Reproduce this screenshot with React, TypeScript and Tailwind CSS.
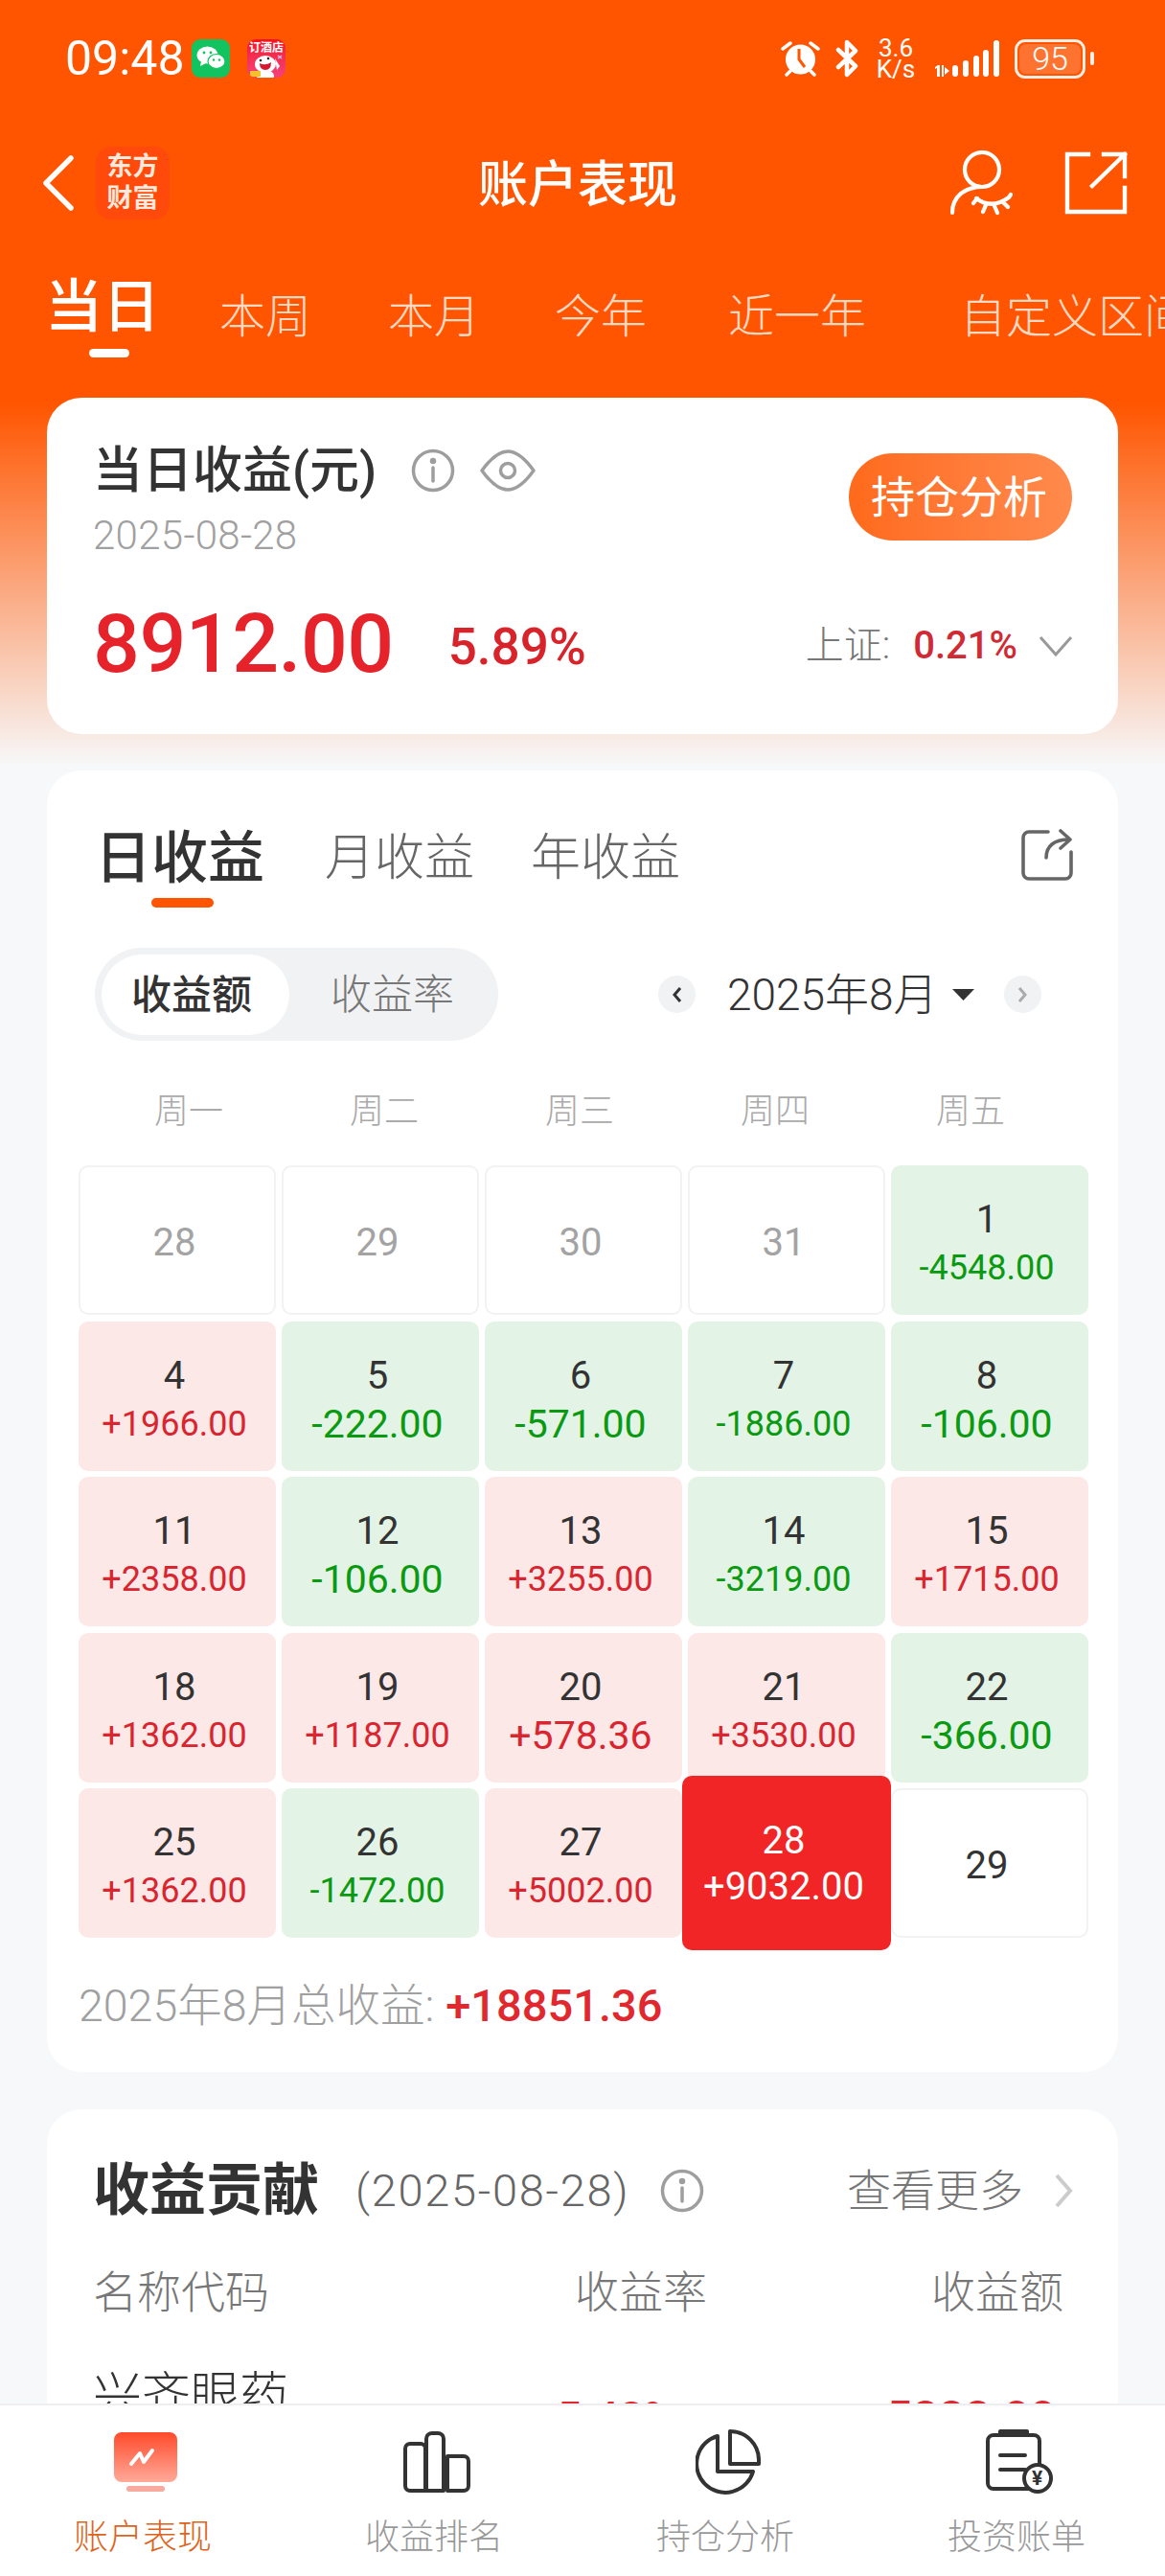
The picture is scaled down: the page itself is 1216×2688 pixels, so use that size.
const days = [
  { d: "28", muted: true },
  { d: "29", muted: true },
  { d: "30", muted: true },
  { d: "31", muted: true },
  { d: "1", v: "-4548.00" },
  { d: "4", v: "+1966.00" },
  { d: "5", v: "-222.00", big: true },
  { d: "6", v: "-571.00", big: true },
  { d: "7", v: "-1886.00" },
  { d: "8", v: "-106.00", big: true },
  { d: "11", v: "+2358.00" },
  { d: "12", v: "-106.00", big: true },
  { d: "13", v: "+3255.00" },
  { d: "14", v: "-3219.00" },
  { d: "15", v: "+1715.00" },
  { d: "18", v: "+1362.00" },
  { d: "19", v: "+1187.00" },
  { d: "20", v: "+578.36", big: true },
  { d: "21", v: "+3530.00" },
  { d: "22", v: "-366.00", big: true },
  { d: "25", v: "+1362.00" },
  { d: "26", v: "-1472.00" },
  { d: "27", v: "+5002.00" },
  { d: "28", v: "+9032.00", today: true },
  { d: "29" },
];

function InfoIcon() {
  return (
    <svg width="46" height="46" viewBox="0 0 46 46" fill="none" stroke="#9e9e9e" strokeWidth="3.5">
      <circle cx="23" cy="23" r="20.5" />
      <path d="M23 20v14" strokeLinecap="round" />
      <circle cx="23" cy="13" r="1.5" fill="#9e9e9e" />
    </svg>
  );
}

function EyeIcon() {
  return (
    <svg width="58" height="44" viewBox="0 0 58 44" fill="none" stroke="#9e9e9e" strokeWidth="3.5">
      <path d="M2 22C12 8 20 2 29 2s17 6 27 20C46 36 38 42 29 42S12 36 2 22Z" strokeLinejoin="round" />
      <circle cx="29" cy="22" r="7.5" />
    </svg>
  );
}

function Alarm() {
  return (
    <svg width="41" height="38" viewBox="0 0 41 38" fill="none">
      <circle cx="20.5" cy="20" r="15.5" fill="#fff" />
      <path d="M19 9v11l6 8" stroke="#ff5500" strokeWidth="3" />
      <path d="M2 9l8-6M39 9l-8-6M6 36l4-4M35 36l-4-4" stroke="#fff" strokeWidth="3.5" strokeLinecap="round" />
    </svg>
  );
}

function Bluetooth() {
  return (
    <svg width="25" height="40" viewBox="0 0 25 40" fill="none" stroke="#fff" strokeWidth="4.5" strokeLinejoin="round" strokeLinecap="round">
      <path d="M3 11l18 17-9 9V3l9 9L3 29" />
    </svg>
  );
}

function Signal() {
  return (
    <svg width="70" height="38" viewBox="0 0 70 38" fill="#fff">
      <path d="M3 28l3-2h2v12H5V29l-2 1ZM10 26h2v12h-2ZM13 28l5 4-5 4Z" />
      <rect x="21" y="26" width="6" height="12" rx="3" />
      <rect x="32" y="21" width="6" height="17" rx="3" />
      <rect x="43" y="16" width="6" height="22" rx="3" />
      <rect x="53" y="10" width="6" height="28" rx="3" />
      <rect x="64" y="0" width="6" height="38" rx="3" />
    </svg>
  );
}

function WeChatIcon() {
  return (
    <div className="flex h-[40px] w-[40px] items-center justify-center rounded-[9px] bg-[#12c45f]">
      <svg width="30" height="26" viewBox="0 0 30 26" fill="#fff">
        <ellipse cx="11.5" cy="9.5" rx="11" ry="9" />
        <path d="M5 16l-1 5 6-3Z" />
        <ellipse cx="21" cy="16" rx="9" ry="7.5" fill="#fff" stroke="#12c45f" strokeWidth="1.2" />
        <circle cx="8" cy="7" r="1.4" fill="#12c45f" />
        <circle cx="15" cy="7" r="1.4" fill="#12c45f" />
        <circle cx="18" cy="14.5" r="1.2" fill="#12c45f" />
        <circle cx="24" cy="14.5" r="1.2" fill="#12c45f" />
      </svg>
    </div>
  );
}

function HotelIcon() {
  return (
    <div className="relative h-[40px] w-[40px] overflow-hidden rounded-[9px] bg-gradient-to-b from-[#f5101c] to-[#f5407c]">
      <div className="text-center text-[12px] leading-[18px] font-bold whitespace-nowrap text-white">订酒店</div>
      <svg className="absolute top-0 left-0" width="40" height="40" viewBox="0 0 40 40">
        <ellipse cx="19" cy="26" rx="11" ry="9" fill="#fff" />
        <ellipse cx="19" cy="38" rx="9" ry="6" fill="#fff" />
        <path d="M13 25q6 3 12-1q0 8-6 8t-6-7Z" fill="#d81830" />
        <circle cx="14" cy="22" r="1.3" fill="#222" />
        <circle cx="22" cy="20" r="1.3" fill="#222" />
        <path d="M29 20l5 8-3 4Z" fill="#fff" />
        <rect x="3" y="33" width="11" height="6" rx="1" fill="#f4c12c" />
        <path d="M32 17l4 3m0-3l-4 3" stroke="#c9c0e8" strokeWidth="1.4" />
      </svg>
    </div>
  );
}

function EyePerson() {
  return (
    <svg width="66" height="68" viewBox="0 0 66 68" fill="none" stroke="#fff" strokeWidth="4.2" strokeLinecap="round">
      <circle cx="34" cy="20" r="18" />
      <path d="M3 65C3 48 16 38 34 38" />
      <path d="M28 50q16 12 34-1M29 50l-4 5M38 57l-3 7M47 58l3 7M56 54l5 5M62 49l2-3" />
    </svg>
  );
}

function ShareSquare() {
  return (
    <svg width="66" height="66" viewBox="0 0 66 66" fill="none" stroke="#fff" strokeWidth="4.4" strokeLinecap="square">
      <path d="M25 3H3v60h60V38" />
      <path d="M29 36L63 3M41 3h22v23" />
    </svg>
  );
}

function TabTrend() {
  return (
    <svg width="66" height="62" viewBox="0 0 66 62" fill="none">
      <defs>
        <linearGradient id="tt" x1="0" y1="0" x2="0" y2="1">
          <stop offset="0" stopColor="#ff4a2a" />
          <stop offset="1" stopColor="#ffaa9a" />
        </linearGradient>
      </defs>
      <rect x="0" y="0" width="66" height="52" rx="8" fill="url(#tt)" />
      <rect x="13" y="56" width="40" height="6" rx="3" fill="#f8aa9e" />
      <path d="M18 33l9-11 4 9 9-12" stroke="#fff" strokeWidth="4" strokeLinecap="round" strokeLinejoin="round" />
    </svg>
  );
}

function TabBars() {
  return (
    <svg width="70" height="64" viewBox="0 0 70 64" fill="none" stroke="#333" strokeWidth="4" strokeLinejoin="round">
      <path d="M2 18a5 5 0 0 1 5-5h11a5 5 0 0 1 5 5v44H7a5 5 0 0 1-5-5Z" />
      <path d="M24 8a6 6 0 0 1 6-6h6a6 6 0 0 1 6 6v54H24Z" />
      <path d="M46 26h17a5 5 0 0 1 5 5v26a5 5 0 0 1-5 5H46Z" />
    </svg>
  );
}

function TabPie() {
  return (
    <svg width="68" height="68" viewBox="0 0 68 68" fill="none" stroke="#333" strokeWidth="4" strokeLinejoin="round">
      <path d="M23 7A30 30 0 1 0 60 44H23Z" />
      <path d="M36 2a30 30 0 0 1 30 31V36H36Z" />
    </svg>
  );
}

function TabBill() {
  return (
    <div className="relative h-[68px] w-[70px]">
      <svg width="70" height="68" viewBox="0 0 70 68" fill="none" stroke="#333" strokeWidth="4">
        <path d="M8 6h42a6 6 0 0 1 6 6v44a6 6 0 0 1-6 6H8a6 6 0 0 1-6-6V12a6 6 0 0 1 6-6Z" />
        <path d="M15 5V2h28v3" strokeLinejoin="round" />
        <path d="M15 27h26M15 42h26" strokeLinecap="round" />
        <circle cx="54" cy="51" r="14" fill="#fff" />
      </svg>
      <span className="absolute top-[37px] left-[48px] text-[21px] leading-[28px] font-bold text-[#333]">¥</span>
    </div>
  );
}

function DayCell({ day }: { day: (typeof days)[number] }) {
  const positive = day.v?.startsWith("+");
  if (day.today) {
    return (
      <div className="relative z-10 -mx-[6px] -my-[13px] flex flex-col items-center justify-center rounded-[10px] bg-[#f22526] pt-[2px] pr-[6px] text-white">
        <span className="text-[40px] leading-[46px] font-normal">{day.d}</span>
        <span className="mt-[2px] text-[40px] leading-[46px]">{day.v}</span>
      </div>
    );
  }
  if (!day.v) {
    return (
      <div className="flex items-center justify-center rounded-[10px] border-2 border-[#f2f2f2] pt-[6px] pr-[6px]">
        <span className={`text-[40px] leading-[46px] ${day.muted ? "text-[#a3a3a3]" : "text-[#333]"}`}>{day.d}</span>
      </div>
    );
  }
  return (
    <div className={`flex flex-col items-center justify-center rounded-[10px] pt-[8px] pr-[6px] ${positive ? "bg-[#fde8e8]" : "bg-[#e3f3e5]"}`}>
      <span className="text-[40px] leading-[46px] text-[#333]">{day.d}</span>
      <span
        className={`mt-[4px] leading-[46px] ${day.big ? "text-[41px]" : "text-[36px]"} ${positive ? "text-[#d9252f]" : "text-[#0a9a12]"}`}
      >
        {day.v}
      </span>
    </div>
  );
}

export default function App() {
  return (
    <div className="flex h-[2688px] w-[1216px] flex-col overflow-hidden bg-[linear-gradient(to_bottom,#ff5500_0px,#ff5500_420px,#f7f8fa_800px)] font-[Roboto,'Noto_Sans_CJK_SC',sans-serif]">
      <div className="flex-1 overflow-hidden">
        {/* status bar */}
        <div className="flex h-[122px] items-center pr-[74px] pl-[68px] text-white">
          <span className="w-[132px] text-[50px] leading-none">09:48</span>
          <WeChatIcon />
          <div className="ml-[18px]">
            <HotelIcon />
          </div>
          <div className="ml-auto flex items-center">
            <Alarm />
            <div className="ml-[16px]">
              <Bluetooth />
            </div>
            <div className="ml-[17px] flex w-[42px] flex-col items-center text-[26px] leading-[22px]">
              <span>3.6</span>
              <span>K/s</span>
            </div>
            <div className="ml-[17px]">
              <Signal />
            </div>
            <div className="ml-[16px] flex h-[41px] w-[74px] items-center rounded-[11px] border-[3px] border-white/90 p-[2px]">
              <div className="flex h-full w-full items-center justify-center rounded-[7px] bg-[#ff7330] text-[34px] leading-none font-light">
                95
              </div>
            </div>
            <div className="ml-[5px] h-[14px] w-[4px] rounded-full bg-white/90" />
          </div>
        </div>

        {/* nav */}
        <div className="flex h-[138px] items-center pr-[39px] pl-[44px] text-white">
          <svg width="34" height="58" viewBox="0 0 34 58" fill="none" stroke="#fff" strokeWidth="5.5" strokeLinecap="round" strokeLinejoin="round">
            <path d="M30 3L4 29l26 26" />
          </svg>
          <div className="ml-[22px] flex h-[76px] w-[77px] flex-col items-center justify-center rounded-[16px] bg-[#ff4a0c] text-[27px] leading-[33px] font-bold text-[#ffe9dc]">
            <span>东方</span>
            <span>财富</span>
          </div>
          <h1 className="mt-[6px] ml-[322px] text-[52px] leading-none font-medium">账户表现</h1>
          <div className="ml-auto flex items-center gap-[54px]">
            <EyePerson />
            <ShareSquare />
          </div>
        </div>

        {/* period tabs */}
        <div className="flex h-[155px] overflow-hidden pt-[30px] pl-[47px] whitespace-nowrap text-white">
          <div className="flex flex-col">
            <span className="text-[60px] leading-[62px] font-medium">当日</span>
            <span className="mt-[12px] ml-[46px] h-[9px] w-[42px] rounded-full bg-white" />
          </div>
          <span className="mt-[13px] ml-[62px] text-[48px] leading-[56px] font-light text-[#fdd9c4]">本周</span>
          <span className="mt-[13px] ml-[80px] text-[48px] leading-[56px] font-light text-[#fdd9c4]">本月</span>
          <span className="mt-[13px] ml-[78px] text-[48px] leading-[56px] font-light text-[#fdd9c4]">今年</span>
          <span className="mt-[13px] ml-[85px] text-[48px] leading-[56px] font-light text-[#fdd9c4]">近一年</span>
          <span className="mt-[13px] ml-[98px] text-[48px] leading-[56px] font-light text-[#fdd9c4]">自定义区间</span>
        </div>

        {/* today card */}
        <div className="mx-[49px] h-[351px] rounded-[36px] bg-white pt-[47px] pr-[47px] pl-[48px]">
          <div className="flex items-start justify-between">
            <div>
              <div className="flex items-center">
                <span className="text-[52px] leading-[60px] font-medium text-[#333]">当日收益(元)</span>
                <div className="-mt-[2px] ml-[36px]">
                  <InfoIcon />
                </div>
                <div className="-mt-[2px] ml-[26px]">
                  <EyeIcon />
                </div>
              </div>
              <div className="mt-[14px] text-[42px] leading-[46px] font-light tracking-[0.3px] text-[#a0a0a0]">2025-08-28</div>
            </div>
            <button className="mt-[11px] mr-[1px] flex h-[91px] w-[233px] items-center justify-center rounded-full bg-gradient-to-r from-[#ff6a1a] to-[#ff8a4c] pr-[3px] text-[46px] leading-none text-white">
              持仓分析
            </button>
          </div>
          <div className="mt-[44px] flex items-center">
            <span className="text-[86px] leading-[92px] font-medium tracking-[-0.5px] text-[#e6232a]">8912.00</span>
            <span className="mt-[6px] ml-[57px] text-[53px] leading-[60px] font-medium text-[#d8232a]">5.89%</span>
            <div className="mt-[4px] ml-auto flex items-center">
              <span className="text-[40px] leading-[50px] font-light text-[#777]">上证:</span>
              <span className="ml-[24px] text-[40px] leading-[50px] font-medium text-[#d02b35]">0.21%</span>
              <svg className="ml-[22px]" width="36" height="22" viewBox="0 0 36 22" fill="none" stroke="#999" strokeWidth="3">
                <path d="M2 2l16 18L34 2" />
              </svg>
            </div>
          </div>
        </div>

        {/* daily earnings card */}
        <div className="mx-[49px] mt-[38px] rounded-[36px] bg-white pt-[60px] pr-[31px] pb-[41px] pl-[33px]">
          <div className="ml-[17px] flex items-start">
            <div className="flex flex-col items-center">
              <span className="text-[59px] leading-[64px] font-medium text-[#333]">日收益</span>
              <span className="mt-[9px] ml-[5px] h-[10px] w-[65px] rounded-full bg-[#ff5500]" />
            </div>
            <span className="ml-[63px] text-[52px] leading-[64px] font-light text-[#666]">月收益</span>
            <span className="ml-[59px] text-[52px] leading-[64px] font-light text-[#666]">年收益</span>
            <svg className="mt-[1px] mr-[16px] ml-auto" width="54" height="54" viewBox="0 0 54 54" fill="none" stroke="#666" strokeWidth="3.6" strokeLinecap="round" strokeLinejoin="round">
              <path d="M28 3H8a6 6 0 0 0-6 6v37a6 6 0 0 0 6 6h38a6 6 0 0 0 6-6V24" />
              <path d="M26 30C26 18 34 11 50 11M41 2l10 9-10 9" />
            </svg>
          </div>

          <div className="mt-[42px] flex items-center">
            <div className="ml-[17px] flex h-[97px] w-[421px] items-center rounded-full bg-[#f1f2f4] pl-[7px]">
              <div className="flex h-[84px] w-[196px] items-center justify-center rounded-full bg-white pt-[2px] pr-[8px] text-[42px] leading-none font-medium text-[#333]">
                收益额
              </div>
              <span className="mt-[2px] ml-[43px] text-[43px] leading-none font-light text-[#777]">收益率</span>
            </div>
            <div className="ml-[167px] flex h-[39px] w-[39px] items-center justify-center rounded-full bg-[#f1f2f4]">
              <svg width="12" height="18" viewBox="0 0 12 18" fill="none" stroke="#333" strokeWidth="3">
                <path d="M9 2L3 9l6 7" />
              </svg>
            </div>
            <span className="ml-[33px] text-[46px] leading-none font-light text-[#333]">2025年8月</span>
            <svg className="ml-[15px]" width="23" height="12" viewBox="0 0 23 12" fill="#333">
              <path d="M0 0h23L11.5 12Z" />
            </svg>
            <div className="ml-[31px] flex h-[39px] w-[39px] items-center justify-center rounded-full bg-[#f1f2f4]">
              <svg width="12" height="18" viewBox="0 0 12 18" fill="none" stroke="#aaa" strokeWidth="3">
                <path d="M3 2l6 7-6 7" />
              </svg>
            </div>
          </div>

          <div className="mt-[54px] mr-[21px] ml-[13px] grid grid-cols-5 text-center text-[36px] leading-[40px] font-light text-[#aaa]">
            <span>周一</span>
            <span>周二</span>
            <span>周三</span>
            <span>周四</span>
            <span>周五</span>
          </div>

          <div className="mt-[36px] grid grid-cols-5 auto-rows-[156px] gap-x-[6px] gap-y-[6.5px]">
            {days.map((day, i) => (
              <DayCell key={i} day={day} />
            ))}
          </div>

          <div className="mt-[43px] flex items-center leading-[56px]">
            <span className="text-[46.5px] font-light text-[#a0a0a0]">2025年8月总收益:</span>
            <span className="ml-[12px] text-[47px] font-medium text-[#e0282e]">+18851.36</span>
          </div>
        </div>

        {/* contribution card */}
        <div className="mx-[49px] mt-[39px] h-[500px] rounded-[36px] bg-white pt-[53px] pr-[47px] pl-[48px]">
          <div className="flex items-center">
            <span className="text-[59px] leading-[64px] font-bold text-[#333]">收益贡献</span>
            <span className="ml-[38px] text-[47px] leading-[64px] font-light tracking-[1.7px] text-[#666]">(2025-08-28)</span>
            <div className="ml-[32px]">
              <InfoIcon />
            </div>
            <span className="ml-auto text-[46px] leading-[64px] font-light text-[#777]">查看更多</span>
            <svg className="ml-[32px]" width="20" height="36" viewBox="0 0 20 36" fill="none" stroke="#ccc" strokeWidth="4">
              <path d="M3 2l14 16L3 34" />
            </svg>
          </div>
          <div className="mt-[46px] mr-[10px] grid grid-cols-[1fr_266px_372px] text-[46px] leading-[56px] font-light text-[#777]">
            <span>名称代码</span>
            <span className="text-right">收益率</span>
            <span className="text-right">收益额</span>
          </div>
          <div className="mt-[50px] mr-[18px] grid grid-cols-[1fr_234px_396px] items-start leading-[60px]">
            <span className="text-[51px] font-light text-[#333]">兴齐眼药</span>
            <span className="mt-[23px] text-right text-[46px] font-medium text-[#e0282e]">5.48%</span>
            <span className="mt-[23px] text-right text-[48px] font-medium text-[#e0282e]">5888.00</span>
          </div>
        </div>
      </div>

      {/* bottom tab bar */}
      <div className="grid h-[180px] shrink-0 grid-cols-4 border-t-2 border-[#eeeef0] bg-white">
        {[
          { label: "账户表现", icon: <TabTrend />, active: true },
          { label: "收益排名", icon: <TabBars /> },
          { label: "持仓分析", icon: <TabPie /> },
          { label: "投资账单", icon: <TabBill /> },
        ].map((tab) => (
          <div key={tab.label} className="flex flex-col items-center pt-[24px]">
            <div className="flex h-[70px] items-center justify-center">{tab.icon}</div>
            <span className={`mt-[22px] mr-[6px] text-[36px] leading-[44px] font-light ${tab.active ? "text-[#dd6420]" : "text-[#999]"}`}>
              {tab.label}
            </span>
          </div>
        ))}
      </div>
    </div>
  );
}
